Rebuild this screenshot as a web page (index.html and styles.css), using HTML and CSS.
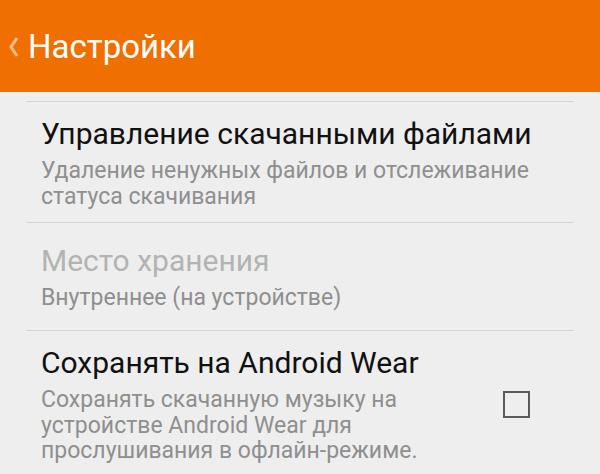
FILE: index.html
```html
<!DOCTYPE html>
<html lang="ru">
<head>
    <meta charset="UTF-8">
    <meta name="viewport" content="width=device-width, initial-scale=1.0">
    <title>Настройки</title>
    <link rel="stylesheet" href="styles.css">
</head>
<body>

    <header class="action-bar">
        <svg class="back-icon" width="14" height="24" viewBox="0 0 14 24">
            <polyline points="11,3 5,12 11,21" fill="none" stroke="#fff" stroke-width="3" stroke-linejoin="miter"/>
        </svg>
        <h1 class="bar-title">Настройки</h1>
    </header>

    <div class="pref-list">
        <div class="pref-item">
            <div class="pref-text">
                <div class="pref-title">Управление скачанными файлами</div>
                <div class="pref-summary">Удаление ненужных файлов и отслеживание статуса скачивания</div>
            </div>
        </div>

        <div class="pref-item disabled">
            <div class="pref-text">
                <div class="pref-title">Место хранения</div>
                <div class="pref-summary">Внутреннее (на устройстве)</div>
            </div>
        </div>

        <div class="pref-item">
            <div class="pref-text narrow">
                <div class="pref-title">Сохранять на Android Wear</div>
                <div class="pref-summary">Сохранять скачанную музыку на устройстве Android Wear для прослушивания в офлайн-режиме.</div>
            </div>
            <span class="checkbox"></span>
        </div>
    </div>

</body>
</html>
```

FILE: styles.css
```css
body {
    margin: 0;
    padding: 0;
    background: #eeeeee;
    font-family: Roboto, "Noto Sans", sans-serif;
    overflow: hidden;
}
/* Action bar */
.action-bar {
    height: 92px;
    background: #ef6f00;
    display: flex;
    align-items: center;
    padding-left: 6px;
}
.back-icon {
    opacity: 0.55;
    margin-top: 2px;
}
.bar-title {
    margin: 0 0 0 8px;
    font-size: 33px;
    font-weight: 400;
    color: #fff;
}
/* Preference list */
.pref-list {
    padding: 9px 26px 0;
}
.pref-item {
    display: flex;
    align-items: center;
    min-height: 108px;
    padding: 14px 14px 13px 15px;
    border-top: 1px solid #d6d6d6;
    box-sizing: border-box;
}
.pref-text {
    flex: 1;
}
.pref-text.narrow {
    flex: none;
    width: 430px;
}
.pref-title {
    font-size: 30px;
    line-height: 36px;
    color: #111;
}
.pref-summary {
    margin-top: 6px;
    font-size: 23px;
    line-height: 25.5px;
    color: #8f8f8f;
}
.disabled .pref-title {
    color: #b3b3b3;
}
.checkbox {
    width: 23px;
    height: 23px;
    border: 2px solid #5a5a5a;
    margin-left: auto;
    margin-right: 30px;
}
```
